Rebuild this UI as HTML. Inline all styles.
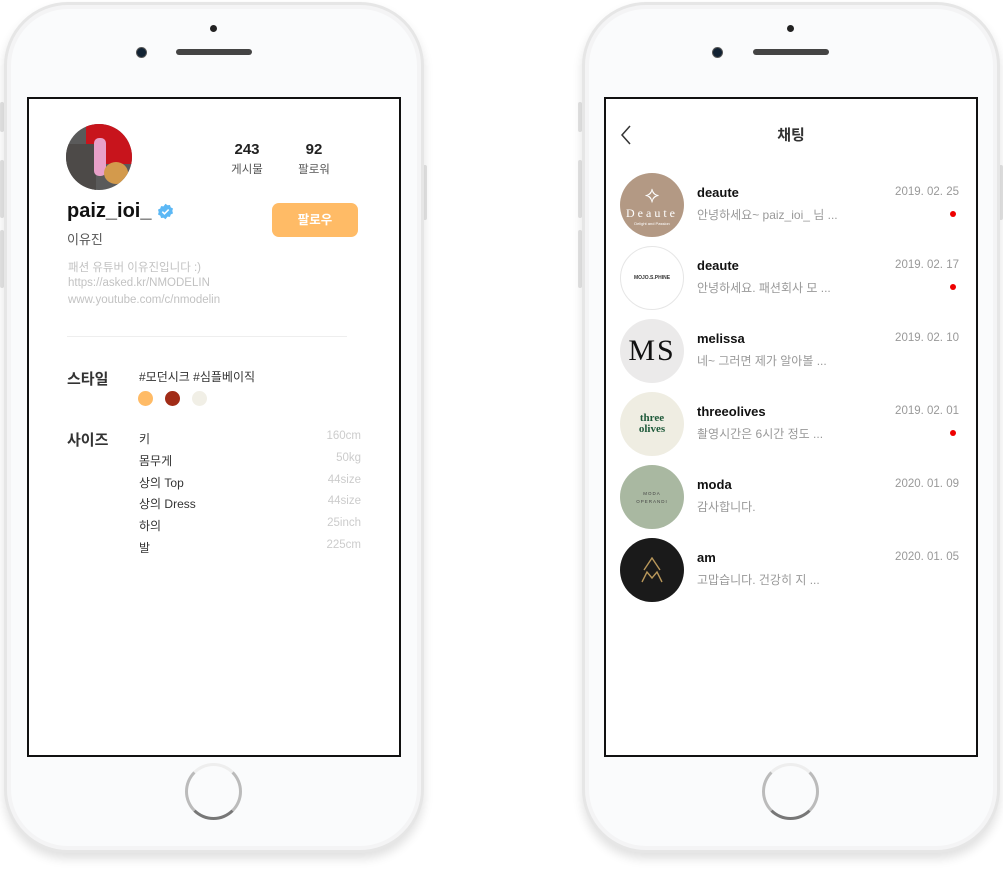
<!DOCTYPE html>
<html><head><meta charset="utf-8"><style>
*{margin:0;padding:0;box-sizing:border-box}
body{width:1003px;height:871px;background:#fff;position:relative;overflow:hidden;font-family:"Liberation Sans","Noto Sans CJK KR",sans-serif;color:#222}
.a{position:absolute}
.phone{position:absolute;top:2px;height:851px;border-radius:64px;background:#fafbfc;border:3px solid #e6e6e6;box-shadow:0 6px 10px rgba(0,0,0,.12),inset 0 0 0 4px #f4f4f5}
.scr{position:absolute;top:97px;height:660px;width:374px;border:2px solid #111;background:#fff}
.spk{position:absolute;top:49px;width:76px;height:6px;border-radius:3px;background:#444}
.cam{position:absolute;top:48px;width:9px;height:9px;border-radius:50%;background:#123;box-shadow:0 0 0 1px #555}
.dot{position:absolute;top:25px;width:7px;height:7px;border-radius:50%;background:#222}
.home{position:absolute;top:763px;width:57px;height:57px;border-radius:50%;border:3px solid #bbb;border-top-color:#eee;border-bottom-color:#777;background:#fafbfc}
.side{position:absolute;width:4px;background:#e4e4e4;border-radius:2px}
.t{position:absolute;white-space:nowrap}
.av{position:absolute;left:620px;width:64px;height:64px;border-radius:50%;overflow:hidden;display:flex;align-items:center;justify-content:center;flex-direction:column}
.nm{left:697px;font-size:13px;font-weight:bold;color:#111}
.ms{left:697px;font-size:12px;color:#999}
.dt{right:44px;font-size:11.5px;color:#999}
.rd{position:absolute;left:950px;width:6px;height:6px;border-radius:50%;background:#e00}
.row{position:absolute;left:139px;width:222px;font-size:12px;color:#333;display:flex;justify-content:space-between}
.row span:last-child{color:#ccc;font-size:11.5px}
</style></head><body>
<div class="side" style="left:0;top:102px;height:30px"></div>
<div class="side" style="left:0;top:160px;height:58px"></div>
<div class="side" style="left:0;top:230px;height:58px"></div>
<div class="side" style="left:423px;top:165px;height:55px"></div>
<div class="side" style="left:578px;top:102px;height:30px"></div>
<div class="side" style="left:578px;top:160px;height:58px"></div>
<div class="side" style="left:578px;top:230px;height:58px"></div>
<div class="side" style="left:999px;top:165px;height:55px"></div>

<div class="phone" style="left:4px;width:420px"></div>
<div class="phone" style="left:582px;width:418px"></div>
<div class="dot" style="left:210px"></div><div class="dot" style="left:787px"></div>
<div class="cam" style="left:137px"></div><div class="cam" style="left:713px"></div>
<div class="spk" style="left:176px"></div><div class="spk" style="left:753px"></div>
<div class="home" style="left:185px"></div><div class="home" style="left:762px"></div>

<div class="scr" style="left:27px"></div>
<div class="scr" style="left:604px"></div>

<!-- left profile -->
<div class="a" style="left:66px;top:124px;width:66px;height:66px;border-radius:50%;overflow:hidden;background:#5a5a5a">
 <div class="a" style="left:20px;top:0;width:46px;height:40px;background:#c8141c"></div>
 <div class="a" style="left:0;top:20px;width:30px;height:46px;background:#4d4a48"></div>
 <div class="a" style="left:28px;top:14px;width:12px;height:38px;background:#e8a0c8;border-radius:5px"></div>
 <div class="a" style="left:38px;top:38px;width:24px;height:22px;background:#d39a4c;border-radius:50%"></div>
</div>
<div class="t" style="left:222px;top:141px;width:50px;text-align:center;font-size:15px;font-weight:bold">243</div>
<div class="t" style="left:222px;top:161px;width:50px;text-align:center;font-size:11.5px;color:#555">게시물</div>
<div class="t" style="left:289px;top:141px;width:50px;text-align:center;font-size:15px;font-weight:bold">92</div>
<div class="t" style="left:289px;top:161px;width:50px;text-align:center;font-size:11.5px;color:#555">팔로워</div>
<div class="t" style="left:67px;top:200px;font-size:20px;font-weight:bold;color:#111">paiz_ioi_</div>
<svg class="a" style="left:157px;top:203px" width="17" height="17" viewBox="0 0 24 24"><path d="M12 1l2.8 2.2 3.5-.4 1.1 3.4 3.2 1.6-1 3.4 1 3.4-3.2 1.6-1.1 3.4-3.5-.4L12 23l-2.8-2.2-3.5.4-1.1-3.4-3.2-1.6 1-3.4-1-3.4 3.2-1.6 1.1-3.4 3.5.4z" fill="#5cb8f5"/><path d="M7.5 12.2l3 3 6-6" fill="none" stroke="#fff" stroke-width="2.2"/></svg>
<div class="t" style="left:67px;top:229px;font-size:13px;color:#555">이유진</div>
<div class="a" style="left:272px;top:203px;width:86px;height:34px;border-radius:7px;background:#ffbb66;color:#fff;font-size:12.5px;font-weight:bold;text-align:center;line-height:34px">팔로우</div>
<div class="t" style="left:68px;top:259px;font-size:11.5px;color:#c2c2c2">패션 유튜버 이유진입니다 :)</div>
<div class="t" style="left:68px;top:277px;font-size:11.5px;color:#c2c2c2">https://asked.kr/NMODELIN</div>
<div class="t" style="left:68px;top:294px;font-size:11.5px;color:#c2c2c2">www.youtube.com/c/nmodelin</div>
<div class="a" style="left:67px;top:336px;width:280px;height:1px;background:#eee"></div>
<div class="t" style="left:67px;top:368px;font-size:15px;font-weight:bold;color:#333">스타일</div>
<div class="t" style="left:139px;top:368px;font-size:12px;color:#333">#모던시크 #심플베이직</div>
<div class="a" style="left:138px;top:391px;width:15px;height:15px;border-radius:50%;background:#ffbb66"></div>
<div class="a" style="left:165px;top:391px;width:15px;height:15px;border-radius:50%;background:#a12c17"></div>
<div class="a" style="left:192px;top:391px;width:15px;height:15px;border-radius:50%;background:#f1efe6"></div>
<div class="t" style="left:67px;top:429px;font-size:15px;font-weight:bold;color:#333">사이즈</div>
<div class="row" style="top:430px"><span>키</span><span>160cm</span></div>
<div class="row" style="top:452px"><span>몸무게</span><span>50kg</span></div>
<div class="row" style="top:474px"><span>상의 Top</span><span>44size</span></div>
<div class="row" style="top:495px"><span>상의 Dress</span><span>44size</span></div>
<div class="row" style="top:517px"><span>하의</span><span>25inch</span></div>
<div class="row" style="top:539px"><span>발</span><span>225cm</span></div>

<!-- right chat -->
<svg class="a" style="left:619px;top:124px" width="14" height="22" viewBox="0 0 14 22"><path d="M11 2L3 11l8 9" fill="none" stroke="#333" stroke-width="1.5"/></svg>
<div class="t" style="left:760px;top:124px;width:62px;text-align:center;font-size:15px;font-weight:bold;color:#333">채팅</div>

<div class="av" style="top:173px;background:#b39984;color:#fff"><div style="font-size:22px;line-height:22px">⟡</div><div style="font-family:'Liberation Serif',serif;font-size:12px;letter-spacing:3px">Deaute</div><div style="font-size:4px">Delight and Passion</div></div>
<div class="t nm" style="top:185px">deaute</div><div class="t ms" style="top:206px">안녕하세요~ paiz_ioi_ 님 ...</div><div class="t dt" style="top:186px">2019. 02. 25</div><div class="rd" style="top:211px"></div>

<div class="av" style="top:246px;background:#fff;border:1px solid #e6e6e6;color:#333"><div style="font-size:5px;font-weight:bold">MOJO.S.PHINE</div></div>
<div class="t nm" style="top:258px">deaute</div><div class="t ms" style="top:279px">안녕하세요. 패션회사 모 ...</div><div class="t dt" style="top:259px">2019. 02. 17</div><div class="rd" style="top:284px"></div>

<div class="av" style="top:319px;background:#ebeaea;color:#111"><div style="font-family:'Liberation Serif',serif;font-size:30px;letter-spacing:2px">MS</div></div>
<div class="t nm" style="top:331px">melissa</div><div class="t ms" style="top:352px">네~ 그러면 제가 알아볼 ...</div><div class="t dt" style="top:332px">2019. 02. 10</div>

<div class="av" style="top:392px;background:#efede2;color:#1f5a3a"><div style="font-family:'Liberation Serif',serif;font-size:11px;font-weight:bold;line-height:11px;text-align:center">three<br>olives</div></div>
<div class="t nm" style="top:404px">threeolives</div><div class="t ms" style="top:425px">촬영시간은 6시간 정도 ...</div><div class="t dt" style="top:405px">2019. 02. 01</div><div class="rd" style="top:430px"></div>

<div class="av" style="top:465px;background:#a9b8a1;color:#444"><div style="font-size:4.5px;letter-spacing:1px">MODA</div><div style="font-size:4.5px;letter-spacing:1px;margin-top:3px">OPERANDI</div></div>
<div class="t nm" style="top:477px">moda</div><div class="t ms" style="top:498px">감사합니다.</div><div class="t dt" style="top:478px">2020. 01. 09</div>

<div class="av" style="top:538px;background:#1a1a1a"><svg width="24" height="26" viewBox="0 0 24 26"><path d="M4 13L12 1l8 12M2 25L7 15l5 6 5-6 5 10" fill="none" stroke="#b8975a" stroke-width="1.4"/></svg></div>
<div class="t nm" style="top:550px">am</div><div class="t ms" style="top:571px">고맙습니다. 건강히 지 ...</div><div class="t dt" style="top:551px">2020. 01. 05</div>
</body></html>
